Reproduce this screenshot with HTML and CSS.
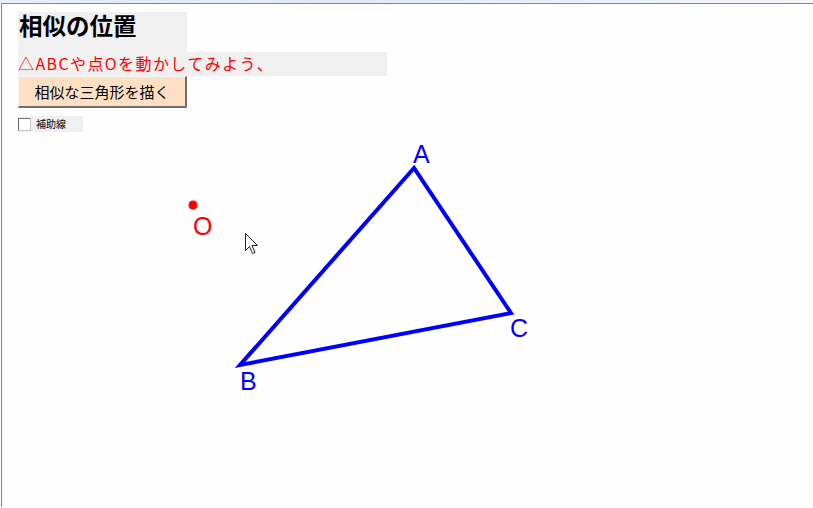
FILE: index.html
```html
<!DOCTYPE html>
<html lang="ja">
<head>
<meta charset="utf-8">
<title>相似の位置</title>
<link rel="stylesheet" href="styles.css">
</head>
<body>
<div class="topstrip"></div>
<div class="window">
  <div class="panel">
    <div class="title">相似の位置</div>
    <div class="subtitle">△ABCや点Oを動かしてみよう、</div>
    <button class="btn">相似な三角形を描く</button>
    <label class="aux"><span class="box"></span><span class="auxtext">補助線</span></label>
  </div>
</div>
<svg class="stage" width="813" height="508" viewBox="0 0 813 508" xmlns="http://www.w3.org/2000/svg">
  <polygon points="414,168 240,365 511,313" fill="none" stroke="#0000ff" stroke-width="4" stroke-linejoin="miter"/>
  <text class="vlabel" x="413" y="163">A</text>
  <text class="vlabel" x="240" y="390">B</text>
  <text class="vlabel" x="510" y="337">C</text>
  <circle cx="193" cy="205" r="4.5" fill="#ff0000"/>
  <text class="olabel" x="193" y="235">O</text>
  <path d="M245.5 233.5 L245.5 250.5 L249.5 246.5 L252.5 253.5 L255 252.5 L252 245.5 L257.5 245.5 Z" fill="#ffffff" stroke="#222" stroke-width="1" stroke-linejoin="miter"/>
</svg>
</body>
</html>
```
FILE: styles.css
```css
html, body {
  margin: 0;
  padding: 0;
  background: #fefefe;
}
body {
  position: relative;
  width: 813px;
  height: 508px;
  overflow: hidden;
  font-family: "Noto Sans CJK JP", "Liberation Sans", sans-serif;
}
.topstrip {
  height: 3px;
  background: linear-gradient(90deg, #e8eef6 0%, #dfe9f5 40%, #e9f0f8 70%, #f2f5f9 100%);
}
.window {
  margin-left: 1px;
  height: 504px;
  border-left: 1px solid #7d8795;
  border-top: 1px solid #7d8795;
  box-sizing: border-box;
}
.panel {
  display: flex;
  flex-direction: column;
  align-items: flex-start;
  padding: 8px 0 0 16px;
}
.title {
  width: 169px;
  height: 40px;
  box-sizing: border-box;
  background: #f0f0f0;
  font-size: 23.5px;
  font-weight: bold;
  line-height: 26px;
  padding: 0 0 0 1px;
  color: #000;
}
.subtitle {
  width: 369px;
  height: 24px;
  background: #f0f0f0;
  color: #ff0000;
  font-size: 16px;
  letter-spacing: 1.4px;
  line-height: 23px;
  white-space: nowrap;
}
.btn {
  width: 169px;
  height: 32px;
  margin: 0;
  padding: 0;
  background: #fde0c3;
  border-top: 1px solid #f4f4f4;
  border-left: 1px solid #f4f4f4;
  border-right: 2px solid #6f6f6f;
  border-bottom: 2px solid #6f6f6f;
  font-family: "Noto Sans CJK JP", "Liberation Sans", sans-serif;
  font-size: 15px;
  color: #000;
  line-height: 28px;
}
.aux {
  margin-top: 8px;
  width: 65px;
  height: 16px;
  background: #f0f0f0;
  display: flex;
  align-items: center;
  gap: 5px;
}
.box {
  width: 11px;
  height: 11px;
  background: #fff;
  border: 1px solid #6e6e6e;
  border-right-color: #c8c8c8;
  border-bottom-color: #c8c8c8;
}
.auxtext {
  font-size: 10px;
  line-height: 14px;
  color: #000;
}
.stage {
  position: absolute;
  left: 0;
  top: 0;
  pointer-events: none;
}
.vlabel {
  font-family: "Liberation Sans", "DejaVu Sans", sans-serif;
  font-size: 25px;
  fill: #0000ff;
}
.olabel {
  font-family: "Liberation Sans", "DejaVu Sans", sans-serif;
  font-size: 25px;
  fill: #ff0000;
}
```
